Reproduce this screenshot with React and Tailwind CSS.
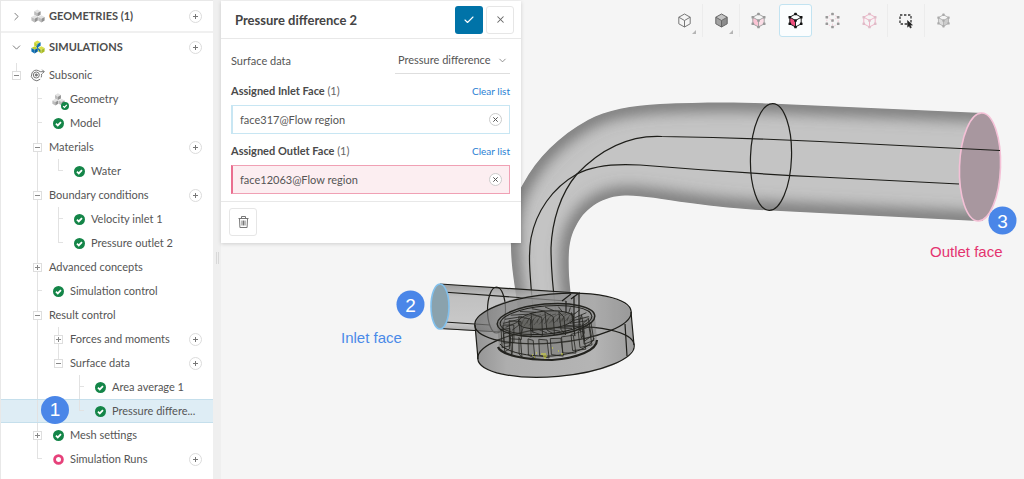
import { useState } from 'react';
import { Check, ChevronDown, ChevronRight, X } from 'lucide-react';

const treeRows = [
  { label: 'Subsonic', cells: ['minus-first'], icon: 'flow' },
  { label: 'Geometry', cells: ['none', 'tee'], icon: 'geometry' },
  { label: 'Model', cells: ['none', 'tee'], icon: 'ok' },
  { label: 'Materials', cells: ['none', 'minus'], add: true },
  { label: 'Water', cells: ['none', 'line', 'end'], icon: 'ok' },
  { label: 'Boundary conditions', cells: ['none', 'minus'], add: true },
  { label: 'Velocity inlet 1', cells: ['none', 'line', 'tee'], icon: 'ok' },
  { label: 'Pressure outlet 2', cells: ['none', 'line', 'end'], icon: 'ok' },
  { label: 'Advanced concepts', cells: ['none', 'plus'] },
  { label: 'Simulation control', cells: ['none', 'tee'], icon: 'ok' },
  { label: 'Result control', cells: ['none', 'minus'] },
  { label: 'Forces and moments', cells: ['none', 'line', 'plus'], add: true },
  { label: 'Surface data', cells: ['none', 'line', 'minus-last'], add: true },
  { label: 'Area average 1', cells: ['none', 'line', 'none', 'tee'], icon: 'ok' },
  { label: 'Pressure differe...', cells: ['none', 'line', 'none', 'end'], icon: 'ok', step: 1 },
  { label: 'Mesh settings', cells: ['none', 'plus'], icon: 'ok' },
  { label: 'Simulation Runs', cells: ['none', 'end'], icon: 'run', add: true },
];

const tools = [
  { name: 'Wireframe', stroke: '#777', more: true },
  { name: 'Solid', stroke: '#666', left: '#a2a2a2', right: '#8c8c8c', top: '#c4c4c4', more: true, divider: true },
  { name: 'Select volumes', stroke: '#a5a5a5', left: '#fbc4d4', right: '#fbdde6', dots: '#999', divider: true },
  { name: 'Select faces', stroke: '#222', left: '#f0507f', dots: '#111', active: true },
  { name: 'Select vertices', stroke: '#f6cdd9', dots: '#999', dashed: true },
  { name: 'Select edges', stroke: '#f3b3c8', dots: '#ddbcc7' },
  { name: 'Box select', box: true, divider: true },
  { name: 'Hide selection', stroke: '#b0b0b0', left: '#ddd', right: '#ccc', dots: '#aaa', slim: true, divider: true },
];

function CheckBadge({ size = 11 }) {
  return (
    <svg width={size} height={size} viewBox="0 0 12 12">
      <circle cx="6" cy="6" r="6" fill="#148548" />
      <path d="M3.2 6.2l2 1.9 3.5-3.7" fill="none" stroke="#fff" strokeWidth="1.9" />
    </svg>
  );
}

function Cube({ x, y, colors }) {
  return (
    <g transform={`translate(${x} ${y})`}>
      <path d="M0-3.6L3.2-1.8 0 0-3.2-1.8z" fill={colors[0]} />
      <path d="M-3.2-1.8L0 0v3.6l-3.2-1.8z" fill={colors[1]} />
      <path d="M3.2-1.8L0 0v3.6l3.2-1.8z" fill={colors[2]} />
    </g>
  );
}

function CubesIcon({ color, size = 14 }) {
  const lime = ['#dbe04a', '#c3cf2c', '#a9bb25'];
  const blue = ['#c3cf2c', '#0f6fb4', '#0a5f9f'];
  const mixed = ['#dbe04a', '#c3cf2c', '#0f6fb4'];
  const gray = ['#e2e2e2', '#bdbdbd', '#929292'];
  return (
    <svg width={size} height={size} viewBox="0 0 14 14">
      <Cube x={6.4} y={4} colors={color ? mixed : gray} />
      <Cube x={3.6} y={9.8} colors={color ? blue : gray} />
      <Cube x={10.4} y={9.8} colors={color ? lime : gray} />
      {color && <path d="M5.2 6.2l2-1.4v3.4l2 1.6v2.4L7 9.2z" fill="#0f6fb4" />}
    </svg>
  );
}

function FlowIcon() {
  return (
    <svg width="15" height="14" viewBox="0 0 15 14" fill="none" stroke="#777">
      <path d="M10.2 11.2A5.2 5.2 0 1 1 8.4 2.6l1.8 1.1h4" />
      <path d="M12.200 1.700l2 2-2 2" />
      <circle cx="6.3" cy="7" r="3" />
      <circle cx="6.3" cy="7" r="1.1" fill="#777" />
      <path d="M11.4 6a5 5 0 0 1-.2 3.400" />
    </svg>
  );
}

function RowIcon({ type }) {
  if (type === 'flow') return <FlowIcon />;
  if (type === 'run') {
    return (
      <svg width="11" height="11" viewBox="0 0 11 11">
        <circle cx="5.5" cy="5.5" r="3.9" fill="none" stroke="#e6417a" strokeWidth="2.8" />
      </svg>
    );
  }
  if (type === 'geometry') {
    return (
      <span className="relative">
        <CubesIcon size={13} />
        <span className="absolute -right-1 -bottom-1">
          <CheckBadge size={8} />
        </span>
      </span>
    );
  }
  return <CheckBadge />;
}

function AddButton({ label }) {
  return (
    <button
      type="button"
      aria-label={`Add ${label}`}
      className="mr-[11px] flex size-[13px] shrink-0 items-center justify-center rounded-full border border-[#dcdcdc] bg-white"
    >
      <svg width="5" height="5" viewBox="0 0 5 5" stroke="#777">
        <path d="M0 2.5h5M2.5 0v5" />
      </svg>
    </button>
  );
}

function TreeCell({ kind }) {
  if (kind === 'none') return <span className="w-[21px] shrink-0" />;
  if (kind === 'line' || kind === 'tee' || kind === 'end') {
    return (
      <span className="flex w-[21px] shrink-0 pl-[10px]">
        <span className={kind === 'end' ? 'h-1/2 border-l border-[#e2e2e2]' : 'h-full border-l border-[#e2e2e2]'} />
        {kind !== 'line' && <span className="h-1/2 w-1 border-b border-[#e2e2e2]" />}
      </span>
    );
  }
  const last = kind === 'minus-last' || kind === 'minus-first';
  return (
    <span className="flex w-[21px] shrink-0 flex-col items-center">
      <span className="w-px flex-1 bg-[#e2e2e2]" />
      <button
        type="button"
        aria-label={kind === 'plus' ? 'Expand' : 'Collapse'}
        className="flex size-[9px] items-center justify-center border border-[#dedede] bg-white"
      >
        <svg width="5" height="5" viewBox="0 0 5 5" stroke="#888">
          <path d={kind === 'plus' ? 'M0 2.5h5M2.5 0v5' : 'M0 2.5h5'} />
        </svg>
      </button>
      <span className={last ? 'w-px flex-1' : 'w-px flex-1 bg-[#e2e2e2]'} />
    </span>
  );
}

function TreeRow({ row }) {
  return (
    <li
      className={
        row.step
          ? 'relative flex h-6 items-center border-y border-[#c5dfec] bg-[#deedf5] pl-[5px]'
          : 'flex h-6 items-center pl-[5px]'
      }
    >
      <span className="flex h-full shrink-0">
        {row.cells.map((kind, i) => (
          <TreeCell key={i} kind={kind} />
        ))}
      </span>
      {row.icon && (
        <span className="flex w-[21px] shrink-0 items-center justify-center">
          <RowIcon type={row.icon} />
        </span>
      )}
      <span className="ml-px flex-1 whitespace-nowrap">{row.label}</span>
      {row.add && <AddButton label={row.label} />}
      {row.step && (
        <span className="absolute -top-1 left-10 flex size-7 items-center justify-center rounded-full bg-[#4a86e8] font-['Liberation_Sans',sans-serif] text-[19px] text-white">
          {row.step}
        </span>
      )}
    </li>
  );
}

function Sidebar() {
  return (
    <aside className="w-[213px] shrink-0 border-t border-l border-[#e8e8e8] bg-white">
      <div className="flex h-8 items-center border-b-2 border-[#f0f0f0] pl-[9px] font-bold text-[#4d4d4d]">
        <ChevronRight size={13} strokeWidth={1.75} className="text-[#777]" />
        <span className="mr-1 ml-2">
          <CubesIcon />
        </span>
        <h2 className="flex-1">GEOMETRIES (1)</h2>
        <AddButton label="geometry" />
      </div>
      <div className="mb-0.5 flex h-7 items-center pl-[9px] font-bold text-[#4d4d4d]">
        <ChevronDown size={13} strokeWidth={1.75} className="text-[#777]" />
        <span className="mr-1 ml-2">
          <CubesIcon color />
        </span>
        <h2 className="flex-1">SIMULATIONS</h2>
        <AddButton label="simulation" />
      </div>
      <ul>
        {treeRows.map((row) => (
          <TreeRow key={row.label} row={row} />
        ))}
      </ul>
    </aside>
  );
}

function ToolIcon({ tool }) {
  if (tool.box) {
    return (
      <svg width="17" height="17" viewBox="0 0 17 17" fill="none">
        <path d="M2 3h11v9H2z" stroke="#333" strokeWidth="1.3" strokeDasharray="2.4 1.6" />
        <path d="M9.5 8.5l5 4.6-2.2.2 1.1 2.2-1.2.6-1.1-2.3-1.5 1.4z" fill="#222" stroke="#222" strokeWidth=".5" />
      </svg>
    );
  }
  const points = [[8.5, 2], [14.2, 5.2], [14.2, 11.8], [8.5, 15], [2.8, 11.8], [2.8, 5.2], [8.5, 8.5]];
  return (
    <svg width={tool.slim ? 15 : 17} height="17" viewBox="0 0 17 17" strokeLinejoin="round">
      <path d="M2.8 5.2l5.7 3.3V15l-5.7-3.2z" fill={tool.left || 'none'} />
      <path d="M14.2 5.2L8.5 8.5V15l5.7-3.2z" fill={tool.right || 'none'} />
      <path d="M8.5 2l5.7 3.2-5.7 3.3-5.7-3.3z" fill={tool.top || 'none'} />
      <path
        d="M8.5 2l5.7 3.2v6.6L8.5 15l-5.7-3.2V5.2zM2.8 5.2l5.7 3.3 5.7-3.3M8.5 8.5V15"
        fill="none"
        stroke={tool.stroke}
        strokeDasharray={tool.dashed ? '1.6 1.6' : undefined}
      />
      {tool.dots &&
        points.map(([x, y]) => <rect key={`${x}-${y}`} x={x - 1.3} y={y - 1.3} width="2.6" height="2.6" rx=".6" fill={tool.dots} />)}
    </svg>
  );
}

function Toolbar() {
  return (
    <div className="relative mt-[3px] mr-[63px] ml-auto flex h-[34px] items-center">
      {tools.map((tool) => (
        <div
          key={tool.name}
          className={
            tool.divider
              ? 'flex w-[37px] justify-center border-l border-[#ececec]'
              : 'flex w-[37px] justify-center border-l border-transparent'
          }
        >
          <button
            type="button"
            aria-label={tool.name}
            className={
              tool.active
                ? 'relative flex size-[33px] items-center justify-center rounded-[3px] border border-[#c2e3f1] bg-[#fbfdfe]'
                : 'relative flex size-[33px] items-center justify-center'
            }
          >
            <ToolIcon tool={tool} />
            {tool.more && (
              <svg width="4" height="4" viewBox="0 0 4 4" className="absolute right-[5px] bottom-[3px]">
                <path d="M4 0v4H0z" fill="#b5b5b5" />
              </svg>
            )}
          </button>
        </div>
      ))}
    </div>
  );
}

function FaceList({ title, face, outlet }) {
  return (
    <section>
      <div className="mt-[7px] flex h-5 items-center justify-between">
        <h3 className="font-bold text-[#4a4a4a]">
          {title} <span className="font-normal text-[#666]">(1)</span>
        </h3>
        <button type="button" className="text-[10px] text-[#2b7fd3]">
          Clear list
        </button>
      </div>
      <div
        className={
          outlet
            ? 'mt-1 flex h-[29px] items-center justify-between border border-l-2 border-[#f0a0b4] border-l-[#ea6f90] bg-[#fceef1] px-[7px]'
            : 'mt-1 flex h-[29px] items-center justify-between border border-l-2 border-[#c8e6f3] bg-white px-[7px]'
        }
      >
        <span>{face}</span>
        <button
          type="button"
          aria-label={`Remove ${face}`}
          className="flex size-[13px] items-center justify-center rounded-full border border-[#ccc] bg-white"
        >
          <svg width="5" height="5" viewBox="0 0 5 5" stroke="#555">
            <path d="M.3.3l4.4 4.4M4.7.3L.3 4.7" />
          </svg>
        </button>
      </div>
    </section>
  );
}

function SettingsPanel() {
  const [type, setType] = useState('Pressure difference');

  return (
    <form className="relative mt-px w-[300px] shrink-0 bg-white shadow-[0_1px_4px_rgba(0,0,0,0.16)]" onSubmit={(e) => e.preventDefault()}>
      <div className="flex h-[38px] items-center border-b border-[#e8e8e8] pr-[7px] pl-[14px]">
        <h1 className="flex-1 text-[13px] font-bold text-[#444]">Pressure difference 2</h1>
        <button type="submit" aria-label="Apply" className="flex size-7 items-center justify-center rounded-[3px] bg-[#0073a8] text-white">
          <Check size={12} strokeWidth={2.2} />
        </button>
        <button type="button" aria-label="Close" className="ml-[3px] flex size-7 items-center justify-center rounded-[3px] border border-[#e6e6e6] text-[#666]">
          <X size={11} strokeWidth={2.2} />
        </button>
      </div>

      <div className="pt-2 pr-[11px] pb-[7px] pl-2.5">
        <div className="flex h-[27px] items-center justify-between">
          <label htmlFor="surface-data">Surface data</label>
          <div className="relative flex h-full w-[115px] items-center border-b border-[#dedede]">
            <select
              id="surface-data"
              value={type}
              onChange={(e) => setType(e.target.value)}
              className="w-full appearance-none bg-transparent pl-[3px] outline-none"
            >
              <option>Pressure difference</option>
              <option>Area average</option>
            </select>
            <ChevronDown size={11} strokeWidth={1.75} className="pointer-events-none absolute right-[2px] text-[#777]" />
          </div>
        </div>
        <FaceList title="Assigned Inlet Face" face="face317@Flow region" />
        <FaceList title="Assigned Outlet Face" face="face12063@Flow region" outlet />
      </div>

      <div className="border-t border-[#e8e8e8] px-2 pt-1.5 pb-[7px]">
        <button type="button" aria-label="Delete" className="flex size-7 items-center justify-center rounded-[3px] border border-[#e6e6e6]">
          <svg width="11" height="12" viewBox="0 0 11 12" fill="none" stroke="#777">
            <path d="M.5 2.5h10M3.5 2.5v-2h4v2M1.5 2.5l.4 9h7.2l.4-9M4 4.5v5M5.5 4.5v5M7 4.5v5" />
          </svg>
        </button>
      </div>
    </form>
  );
}

const pipeOutline =
  'M519 318C516 290 511 270 511 246C509 222 514 198 523 184C537 158 559 136 588 120C606 110 632 105.500 660 104C700 102 740 102 770 103.500L983 113V221L978 221L790 211.500C755 210 725 208 690 203C660 199 640 195 625 195.500C604 196 586 207 577 224C569 238 568 250 569 275C570 290 572 304 573 318Z';

// Points round a tilted ellipse, used for the impeller blades
function ringPoint(cx, cy, rx, ry, angle) {
  const tilt = -0.08;
  const x = rx * Math.cos(angle);
  const y = ry * Math.sin(angle);
  return [cx + x * Math.cos(tilt) - y * Math.sin(tilt), cy + x * Math.sin(tilt) + y * Math.cos(tilt)].map((n) => n.toFixed(1));
}

function Impeller() {
  const blades = Array.from({ length: 20 }, (_, i) => {
    const a = (i / 20) * Math.PI * 2;
    const outerTop = ringPoint(546, 326, 45, 14, a);
    const outerBottom = ringPoint(548, 344, 46, 14, a);
    const innerTop = ringPoint(546, 328, 37, 11, a + 0.22);
    const innerBottom = ringPoint(547, 345, 38, 10, a + 0.22);
    return `M${innerTop}L${outerTop}L${outerBottom}L${innerBottom}Z`;
  });
  const vanes = Array.from({ length: 20 }, (_, i) => {
    const a = (i / 20) * Math.PI * 2;
    return `M${ringPoint(546, 320, 29, 9, a + 0.3)}L${ringPoint(546, 320, 43, 13, a)}`;
  });
  const hatch = Array.from({ length: 10 }, (_, i) => {
    const x = 522 + i * 5;
    return `M${x} ${324 - i * 0.3}Q${x + 1} ${317 - i * 0.4} ${x + 9} ${315 - i * 0.2}M${x + 2} ${326 - i * 0.5}L${x + 7} ${319 - i * 0.2}`;
  });
  return (
    <g fill="none" stroke="#23231f">
      <path d="M497 322L499 348C510 364 585 361 597 341L595 316Z" fill="#5c5c58" fillOpacity=".3" stroke="none" />
      <ellipse cx="546" cy="320" rx="49" ry="16" transform="rotate(-5 546 320)" fill="#555" fillOpacity=".2" strokeWidth="1.4" />
      <ellipse cx="546" cy="320" rx="46" ry="14" transform="rotate(-5 546 320)" />
      <ellipse cx="546" cy="320" rx="28" ry="9" transform="rotate(-5 546 320)" fill="#4a4a46" fillOpacity=".4" />
      <path d={hatch.join('')} strokeWidth=".6" strokeOpacity=".7" />
      <path d={vanes.join('')} strokeWidth=".8" />
      <path d={blades.join('')} strokeWidth=".8" fill="#4c4c48" fillOpacity=".14" />
      <path d="M498 347C501 355 525 360 552 360C578 358 597 350 597 340" strokeWidth="2.2" />
      <path d="M500 344C506 352 528 357 552 356C575 354 591 347 594 338" />
      <path d="M532 355h1M536 353h1M541 354h5M543 356h4M544 358h2M552 348h1M534 357h1M561 354h2M558 351h1" stroke="#d8dc35" />
    </g>
  );
}

function Marker({ x, y, children }) {
  return (
    <>
      <circle cx={x} cy={y} r="14" fill="#4a86e8" />
      <text x={x} y={y + 7} textAnchor="middle" fontSize="19" fill="#fff">
        {children}
      </text>
    </>
  );
}

function ModelView() {
  return (
    <svg
      viewBox="221 0 803 479"
      preserveAspectRatio="xMidYMin meet"
      className="absolute inset-0 h-full w-full font-['Liberation_Sans',sans-serif]"
    >
      <defs>
        <clipPath id="pipe">
          <path d={pipeOutline} />
        </clipPath>
        <filter id="shade" x="-10%" y="-10%" width="120%" height="120%">
          <feGaussianBlur stdDeviation="8" />
        </filter>
        <linearGradient id="casing" x1="0" x2="1">
          <stop offset="0" stopColor="#666" />
          <stop offset=".2" stopColor="#8c8c8c" />
          <stop offset=".75" stopColor="#969696" />
          <stop offset="1" stopColor="#757575" />
        </linearGradient>
        <linearGradient id="inlet" x1="0" x2="0" y1="0" y2="1">
          <stop offset="0" stopColor="#858585" />
          <stop offset=".25" stopColor="#b4b4b4" />
          <stop offset=".75" stopColor="#bdbdbd" />
          <stop offset="1" stopColor="#858585" />
        </linearGradient>
      </defs>

      {/* Outlet pipe */}
      <g clipPath="url(#pipe)">
        <path d={pipeOutline} fill="#c4c4c4" />
        <path
          d="M519 335C516 290 511 270 511 246C509 222 514 198 523 184C537 158 559 136 588 120C606 110 632 105.500 660 104C700 102 740 102 770 103.500L1010 114M1010 222.500L790 211.500C755 210 725 208 690 203C660 199 640 195 625 195.500C604 196 586 207 577 224C569 238 568 250 569 275C570 290 572 304 573 335"
          fill="none"
          stroke="#606060"
          strokeWidth="13"
          filter="url(#shade)"
        />
      </g>
      <ellipse cx="980" cy="167" rx="20.500" ry="54" transform="rotate(2 980 167)" fill="#a8979f" stroke="#f4c0d6" strokeWidth="1.600" />
      <g fill="none" stroke="#1d1d19" strokeWidth="1.200">
        <path d="M1000 150.500L820 141.500C750 138 700 137 662 136.500C630 135 602 148 577 174C560 194 552 222 551 248C551 270 553 290 556 313" />
        <path d="M959 184L820 177C760 174 700 170 640 165C608 163 590 167 577 174C552 188 536 212 531 238C527 260 532 290 534 325" />
        <ellipse cx="771" cy="157" rx="20.500" ry="53.500" transform="rotate(2 771 157)" />
      </g>

      {/* Inlet pipe */}
      <path d="M440 284L580 293L565 336L440 329Z" fill="url(#inlet)" fillOpacity=".8" />
      <g fill="none" stroke="#1d1d19" strokeWidth="1.200">
        <path d="M440 284L578 293M436 291.500L566 301M437 321.500L490 325M440 328.500L500 332" />
        <ellipse cx="496.500" cy="310" rx="9" ry="23" />
      </g>
      <ellipse cx="440" cy="306.500" rx="9" ry="22.500" fill="#8aa2ad" stroke="#82c0ec" strokeWidth="1.600" />

      {/* Pump casing */}
      <path
        d="M475 326C478 306 520 292 570 293C605 293 632 302 631 313L634 345C632 364 590 377 540 377C505 378 478 369 478 359Z"
        fill="url(#casing)"
        fillOpacity=".68"
      />
      <g fill="none" stroke="#1d1d19" strokeWidth="1.200">
        <ellipse cx="553" cy="318.500" rx="78.500" ry="24.500" transform="rotate(-5 553 318.500)" fill="#777" fillOpacity=".15" />
        <ellipse cx="556" cy="352" rx="78.500" ry="24.500" transform="rotate(-5 556 352)" />
        <path d="M475 325L478 359M631 312L634 345M625 324L627 356M571 299L579 293V330M574 296V328M562 301L571 294M566 301V313" />
      </g>
      <Impeller />

      <Marker x={410.5} y={304.5}>2</Marker>
      <text x="341" y="343" fontSize="15" fill="#4a8ae8">
        Inlet face
      </text>
      <Marker x={1002.5} y={220.5}>3</Marker>
      <text x="930" y="257" fontSize="15" fill="#e4336f">
        Outlet face
      </text>
    </svg>
  );
}

export default function App() {
  return (
    <div className="flex min-h-screen bg-[#f5f5f5] font-['Lato',sans-serif] text-[11px] leading-4 text-[#555]">
      <Sidebar />
      <div className="flex w-2 shrink-0 items-center justify-center gap-px bg-[#efefef] pt-9">
        <span className="h-3 w-px bg-[#d8d8d8]" />
        <span className="h-3 w-px bg-[#d8d8d8]" />
      </div>
      <main className="relative flex flex-1 items-start">
        <ModelView />
        <SettingsPanel />
        <Toolbar />
      </main>
    </div>
  );
}
